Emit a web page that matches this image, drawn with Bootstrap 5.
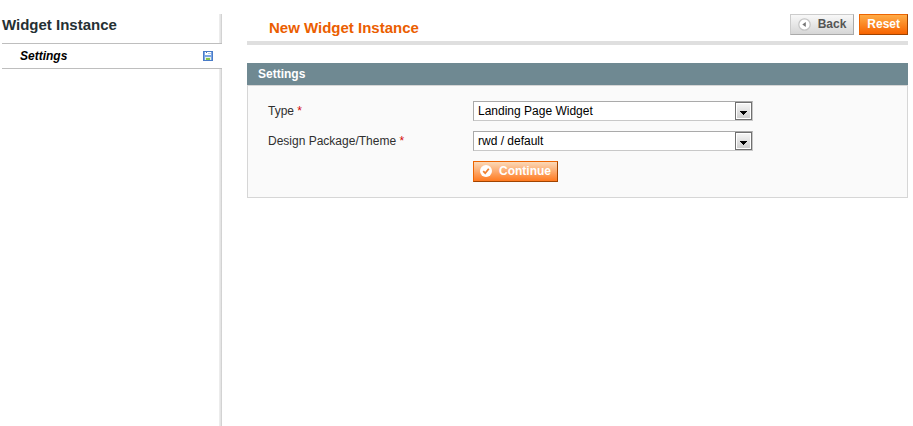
<!DOCTYPE html>
<html lang="en">
<head>
<meta charset="utf-8">
<meta name="viewport" content="width=device-width, initial-scale=1">
<title>New Widget Instance</title>
<link rel="stylesheet" href="https://cdn.jsdelivr.net/npm/bootstrap@5.3.0/dist/css/bootstrap.min.css">
<style>
body { font: 12px/16px "Liberation Sans", Arial, sans-serif; color: #2f2f2f; background: #fff; }
.page { padding: 14px 5px 0 2px; gap: 25px; }
.side { width: 220px; background: linear-gradient(to right, #f0f0f0, #e4e4e4 50%, #cacaca) right / 3px 100% no-repeat; }
.side-title { font-size: 15px; line-height: 20px; color: #253033; padding-top: 1px; margin-bottom: 8px; }
.side-tab { background: #fff; border: solid #bebebe; border-width: 1px 0; padding: 4px 9px 4px 18px; color: #000; }
.side-tab:hover { color: #000; }
.page-head { border-bottom: 4px solid #dfdfdf; padding: 0 0 3px 22px; margin-bottom: 18px; }
.page-title { font-size: 15px; line-height: 20px; color: #eb5e00; padding-top: 4px; }
.tools { gap: 5px; }
.act { --bs-btn-font-size: 12px; --bs-btn-line-height: 16px; --bs-btn-border-radius: 0; --bs-btn-padding-x: 7px; --bs-btn-padding-y: 0; height: 21px; padding-bottom: 1px; }
.act-back, .act-back:hover { color: #555; border-color: #ccc #aaa #aaa #ccc; background: linear-gradient(#f8f8f8, #d6d6d6); }
.act-reset, .act-reset:hover { color: #fff; border-color: #ed6502 #a04300 #a04300 #ed6502; background: linear-gradient(#ffac47, #f76300); }
.act-go, .act-go:hover { color: #fff; padding-left: 6px; padding-right: 6px; border-color: #ed6502 #a04300 #a04300 #ed6502; background: linear-gradient(#fbd9b8, #ff7a20); }
.act-icon { margin-right: 7px; }
.panel-head { background: #6f8992; color: #fff; padding: 3px 11px; font-size: 12px; line-height: 16px; }
.panel-body { background: #fafafa; border: 1px solid #d6d6d6; padding: 15px 20px; }
.fields { display: grid; grid-template-columns: 205px minmax(0, 280px); row-gap: 10px; align-items: center; }
.req { color: #d40707; }
.pick { height: 20px; padding: 0 20px 1px 4px; font-size: 12px; line-height: 16px; color: #000; border-radius: 0; border-color: #aaa #c8c8c8 #c8c8c8 #aaa;
  background: #fff url("data:image/svg+xml,%3Csvg xmlns='http://www.w3.org/2000/svg' width='17' height='18' shape-rendering='crispEdges'%3E%3Cdefs%3E%3ClinearGradient id='g' x2='0' y2='1'%3E%3Cstop stop-color='%23f4f4f4'/%3E%3Cstop offset='1' stop-color='%23cfcfcf'/%3E%3C/linearGradient%3E%3C/defs%3E%3Cpath fill='%23707070' d='M0 0h17v18H0z'/%3E%3Cpath fill='%23fff' d='M1 1h15v16H1z'/%3E%3Cpath fill='url(%23g)' d='M2 2h13v14H2z'/%3E%3Cpath d='M5 9h7v1H5zM6 10h5v1H6zM7 11h3v1H7zM8 12h1v1H8z'/%3E%3C/svg%3E") right 0 top 0 / 17px 18px no-repeat; }
.act-row { grid-column: 2; }
</style>
<script src="https://cdn.jsdelivr.net/npm/bootstrap@5.3.0/dist/js/bootstrap.bundle.min.js" defer></script>
</head>
<body>
<div class="page d-flex min-vh-100">
  <aside class="side flex-shrink-0">
    <h3 class="side-title fw-bold">Widget Instance</h3>
    <nav>
      <a href="#settings" class="side-tab d-flex justify-content-between align-items-center fw-bold fst-italic text-decoration-none">
        Settings
        <svg width="10" height="10" viewBox="0 0 10 10" shape-rendering="crispEdges" aria-hidden="true">
          <path fill="#4a7cc8" d="M0 0h10v10H0z"/><path fill="#7ba6e4" d="M1 1h8v8H1z"/>
          <path fill="#fff" d="M2 1h6v3H2z"/><path fill="#b9cbe4" d="M5 2h3v1H5z"/><path fill="#4b75ad" d="M3 1h1v1H3z"/>
          <path fill="#e9f4e4" d="M2 6h6v3H2z"/><path fill="#86c54a" d="M3 7h4v2H3z"/>
        </svg>
      </a>
    </nav>
  </aside>
  <main class="flex-grow-1">
    <header class="page-head d-flex justify-content-between">
      <h1 class="page-title fw-bold mb-0">New Widget Instance</h1>
      <div class="tools d-flex align-items-start">
        <button type="button" class="btn act act-back fw-bold d-flex align-items-center">
          <svg class="act-icon" width="13" height="13" viewBox="0 0 13 13" aria-hidden="true"><circle cx="6.5" cy="6.5" r="5.7" fill="#fff" stroke="#c4c4c4" stroke-width="1.2"/><path fill="#777" d="M4.3 6.5 7.8 4v5z"/></svg>Back
        </button>
        <button type="button" class="btn act act-reset fw-bold d-flex align-items-center">Reset</button>
      </div>
    </header>
    <section id="settings">
      <h4 class="panel-head fw-bold mb-0">Settings</h4>
      <form class="panel-body">
        <div class="fields">
          <label for="type">Type <span class="req">*</span></label>
          <select id="type" class="form-select pick"><option>Landing Page Widget</option></select>
          <label for="theme">Design Package/Theme <span class="req">*</span></label>
          <select id="theme" class="form-select pick"><option>rwd / default</option></select>
          <div class="act-row">
            <button type="button" class="btn act act-go fw-bold d-flex align-items-center">
              <svg class="act-icon" width="12" height="12" viewBox="0 0 12 12" aria-hidden="true"><circle cx="6" cy="6" r="6" fill="#fff"/><path fill="none" stroke="#f08030" stroke-width="1.8" d="M3.2 6.2 5.2 8.2 8.8 3.8"/></svg>Continue
            </button>
          </div>
        </div>
      </form>
    </section>
  </main>
</div>
</body>
</html>
